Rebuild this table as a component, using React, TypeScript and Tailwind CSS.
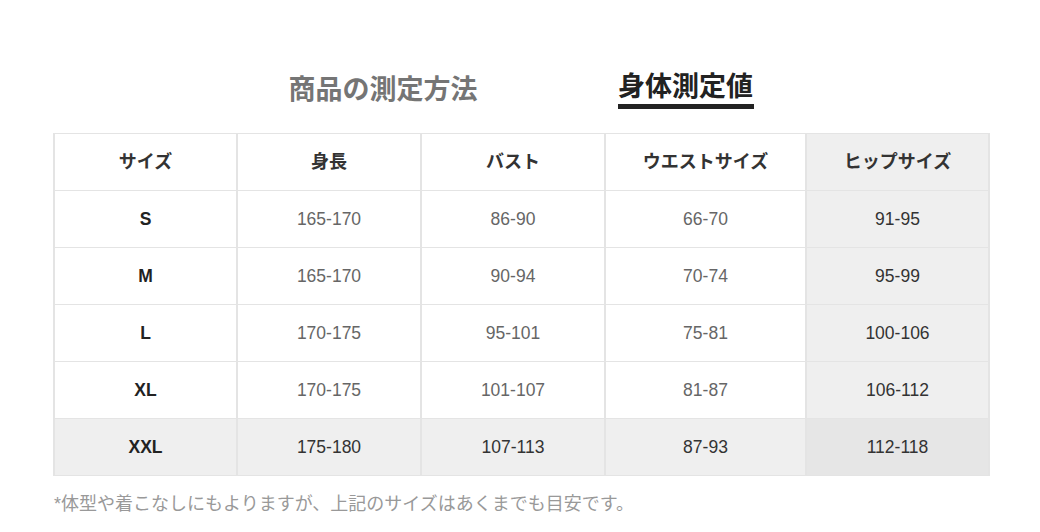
const rows = [
  { size: 'S', height: '165-170', bust: '86-90', waist: '66-70', hip: '91-95' },
  { size: 'M', height: '165-170', bust: '90-94', waist: '70-74', hip: '95-99' },
  { size: 'L', height: '170-175', bust: '95-101', waist: '75-81', hip: '100-106' },
  { size: 'XL', height: '170-175', bust: '101-107', waist: '81-87', hip: '106-112' },
  { size: 'XXL', height: '175-180', bust: '107-113', waist: '87-93', hip: '112-118' },
];

const cell = 'h-[57px] border-y border-x-2 border-[#e4e4e4] text-center align-middle p-0';

export default function App() {
  return (
    <div
      className="w-[1040px] bg-white"
      style={{ fontFamily: '"Liberation Sans", "Noto Sans CJK JP", sans-serif' }}
    >
      {/* Tabs */}
      <div className="flex justify-center gap-[140px] pt-[70px] pl-[2px]">
        <button className="text-[27px] font-bold leading-[34px] text-[#757575]">商品の測定方法</button>
        <button className="flex flex-col items-center text-[27px] font-bold leading-[34px] text-[#222]">
          身体測定値
          <span className="h-[5px] w-[136px] bg-[#222]" />
        </button>
      </div>

      {/* Table */}
      <table className="ml-[53px] mt-[24px] w-[935px] table-fixed border-collapse">
        <colgroup>
          <col className="w-[183px]" />
          <col className="w-[184px]" />
          <col className="w-[184px]" />
          <col className="w-[201px]" />
          <col className="w-[183px]" />
        </colgroup>
        <thead>
          <tr className="text-[18px] font-bold text-[#333]">
            <th className={cell}>サイズ</th>
            <th className={cell}>身長</th>
            <th className={cell}>バスト</th>
            <th className={cell}>ウエストサイズ</th>
            <th className={`${cell} bg-[#efefef]`}>ヒップサイズ</th>
          </tr>
        </thead>
        <tbody>
          {rows.map((r, i) => {
            const last = i === rows.length - 1;
            const val = last ? 'text-[#333] bg-[#efefef]' : 'text-[#666]';
            return (
              <tr key={r.size} className="text-[17.5px]">
                <td className={`${cell} font-bold text-[#222] ${last ? 'bg-[#efefef]' : ''}`}>{r.size}</td>
                <td className={`${cell} ${val}`}>{r.height}</td>
                <td className={`${cell} ${val}`}>{r.bust}</td>
                <td className={`${cell} ${val}`}>{r.waist}</td>
                <td className={`${cell} text-[#333] ${last ? 'bg-[#e6e6e6]' : 'bg-[#efefef]'}`}>{r.hip}</td>
              </tr>
            );
          })}
        </tbody>
      </table>

      <p className="ml-[54px] mt-[15px] text-[18px] leading-[26px] text-[#999]">
        *体型や着こなしにもよりますが、上記のサイズはあくまでも目安です。
      </p>
    </div>
  );
}
